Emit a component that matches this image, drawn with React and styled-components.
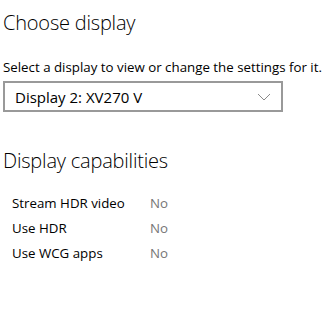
import React from "react";
import styled, { createGlobalStyle } from "styled-components";

const GlobalStyle = createGlobalStyle`
  html, body {
    margin: 0;
    padding: 0;
    background: #ffffff;
  }
  body {
    font-family: "Open Sans", "Noto Sans", sans-serif;
    color: #000000;
  }
`;

const Page = styled.div`
  width: 335px;
  height: 310px;
  padding: 9px 0 0 3px;
  box-sizing: border-box;
  overflow: hidden;
`;

const Heading = styled.h2`
  margin: 0;
  font-size: 20px;
  font-weight: 300;
  line-height: 28px;
  letter-spacing: -0.2px;
`;

const Description = styled.p`
  margin: 21px 0 0;
  font-size: 13.3px;
  line-height: 18px;
`;

const Dropdown = styled.div`
  margin-top: 5px;
  width: 280px;
  height: 31px;
  box-sizing: border-box;
  border: 2px solid #999999;
  display: flex;
  align-items: center;
  justify-content: space-between;
  padding: 0 10px;
  font-size: 15px;
`;

const Chevron = styled.svg`
  width: 14px;
  height: 8px;
  display: block;
`;

const SectionHeading = styled(Heading)`
  margin-top: 35px;
`;

const CapList = styled.div`
  margin-top: 15px;
  padding-left: 9px;
  display: grid;
  grid-template-columns: 138px auto;
  grid-auto-rows: 25px;
  align-items: center;
  font-size: 13.3px;
`;

const CapValue = styled.span`
  color: #767676;
`;

const caps = [
  ["Stream HDR video", "No"],
  ["Use HDR", "No"],
  ["Use WCG apps", "No"],
];

export default function App() {
  return (
    <>
      <GlobalStyle />
      <Page>
        <Heading>Choose display</Heading>
        <Description>Select a display to view or change the settings for it.</Description>
        <Dropdown>
          <span>Display 2: XV270 V</span>
          <Chevron viewBox="0 0 14 8">
            <path d="M1 1 L7 7 L13 1" fill="none" stroke="#8a8a8a" strokeWidth="1" />
          </Chevron>
        </Dropdown>
        <SectionHeading>Display capabilities</SectionHeading>
        <CapList>
          {caps.map(([label, value]) => (
            <React.Fragment key={label}>
              <span>{label}</span>
              <CapValue>{value}</CapValue>
            </React.Fragment>
          ))}
        </CapList>
      </Page>
    </>
  );
}
